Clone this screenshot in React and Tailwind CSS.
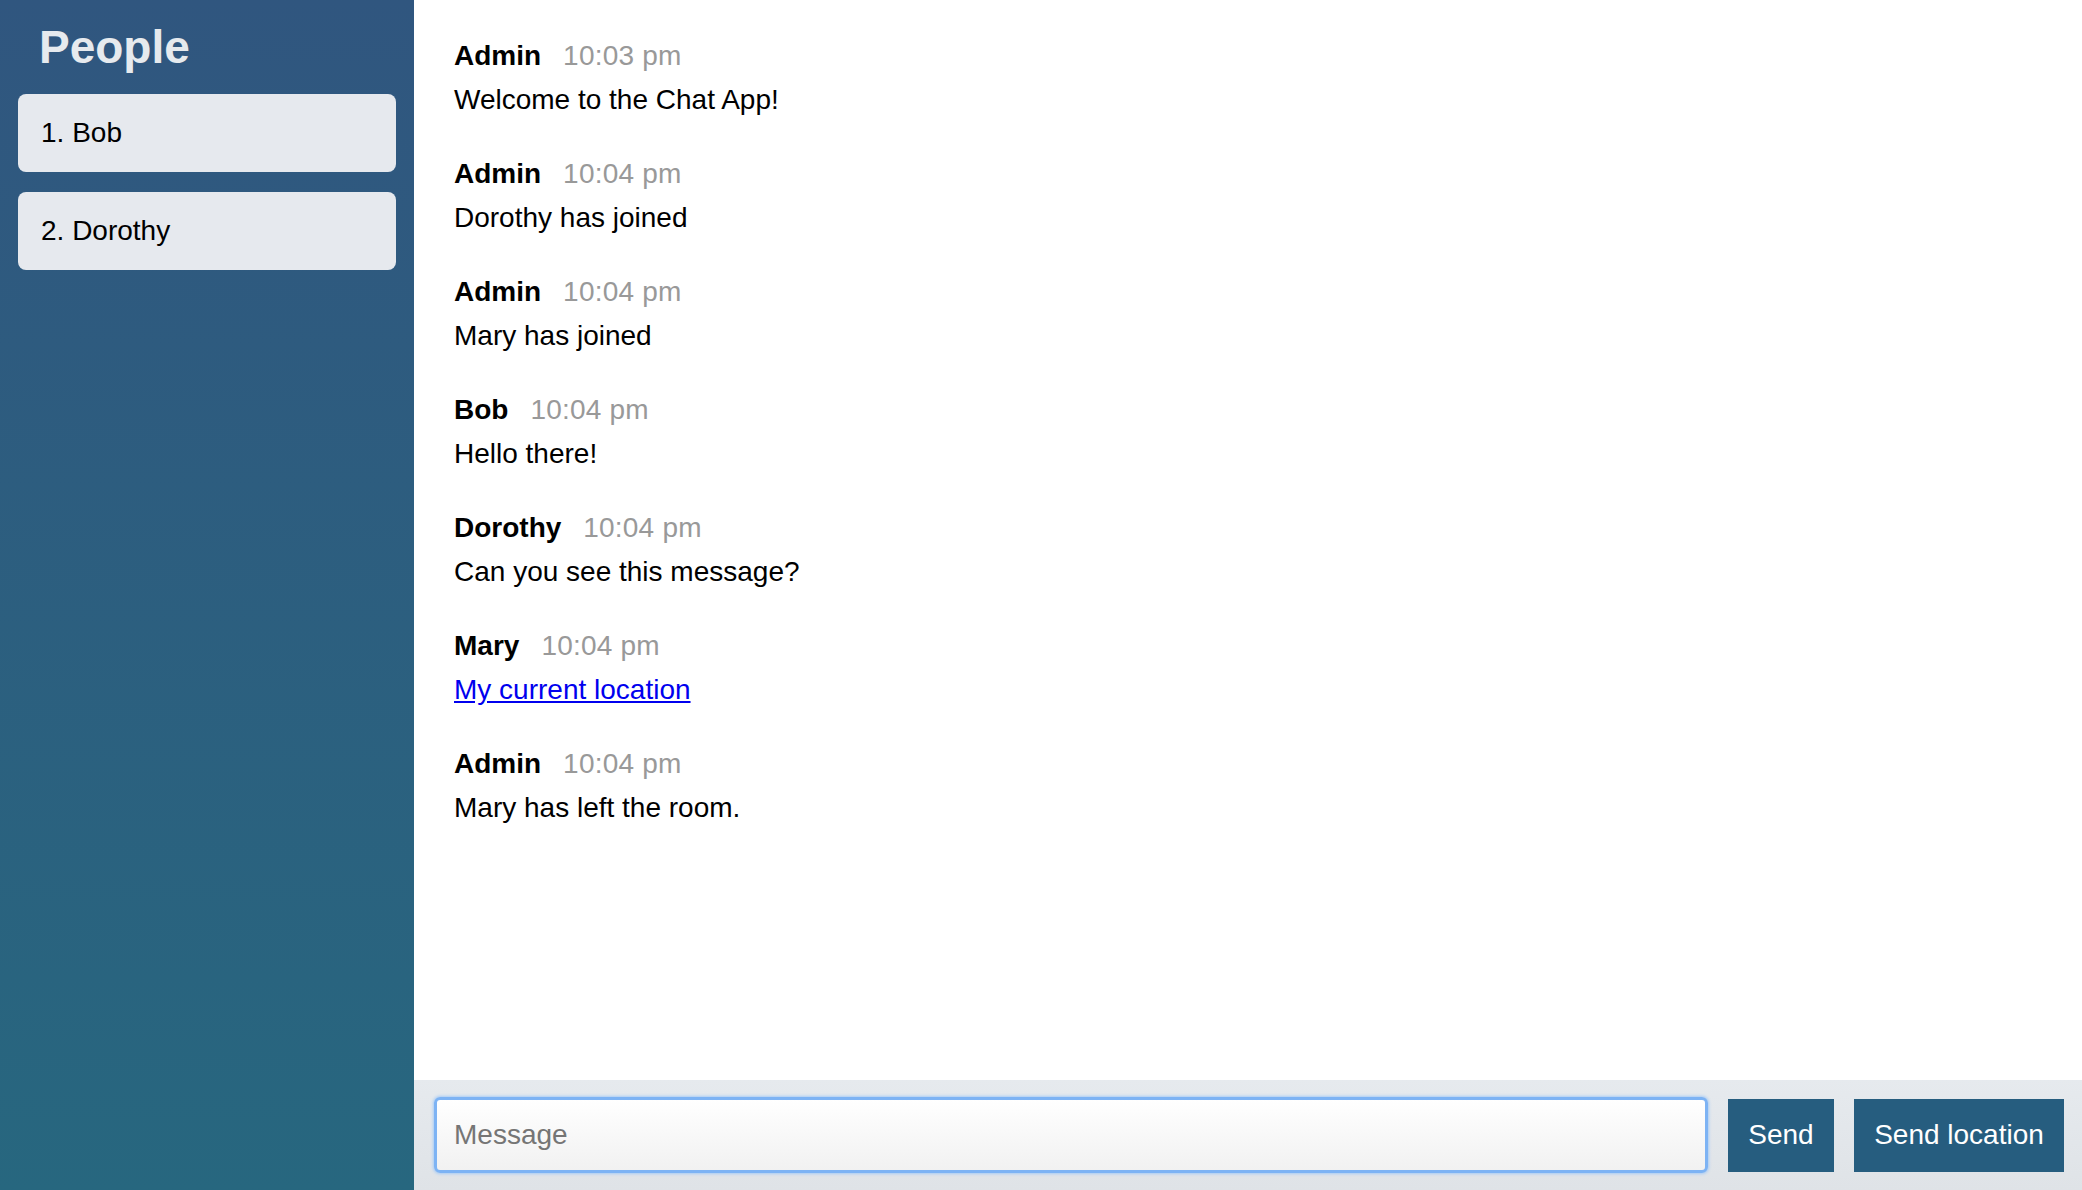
import React from "react";

const messages = [
  { from: "Admin", time: "10:03 pm", text: "Welcome to the Chat App!" },
  { from: "Admin", time: "10:04 pm", text: "Dorothy has joined" },
  { from: "Admin", time: "10:04 pm", text: "Mary has joined" },
  { from: "Bob", time: "10:04 pm", text: "Hello there!" },
  { from: "Dorothy", time: "10:04 pm", text: "Can you see this message?" },
  { from: "Mary", time: "10:04 pm", link: "My current location" },
  { from: "Admin", time: "10:04 pm", text: "Mary has left the room." },
];

export default function App() {
  return (
    <div
      className="flex w-[2082px] h-[1190px] overflow-hidden bg-white text-black"
      style={{ fontFamily: '"Liberation Sans", Arial, sans-serif' }}
    >
      <aside className="w-[414px] shrink-0 h-full bg-linear-to-b from-[#30567f] to-[#27677f] px-[18px] pt-[24px]">
        <h3 className="pl-[21px] text-[46px] leading-[46px] font-bold text-[#e6eaee] mb-[24px]">
          People
        </h3>
        <ol className="flex flex-col gap-[20px]">
          {["Bob", "Dorothy"].map((n, i) => (
            <li
              key={n}
              className="h-[78px] rounded-[8px] bg-[#e6e9ee] pl-[23px] text-[28px] leading-[78px]"
            >
              {i + 1}. {n}
            </li>
          ))}
        </ol>
      </aside>
      <main className="flex-1 flex flex-col h-full">
        <ol className="flex-1 pl-[40px] pt-[38px]">
          {messages.map((m, i) => (
            <li key={i} className="mb-[38px]">
              <div className="flex items-baseline h-[36px] leading-[36px]">
                <span className="text-[28px] font-bold mr-[22px]">{m.from}</span>
                <span className="text-[28px] text-[#999999] tracking-[0.2px]">{m.time}</span>
              </div>
              <div className="mt-[8px] h-[36px] leading-[36px] text-[28px]">
                {m.link ? (
                  <a href="#" className="text-[#0000ee] underline">
                    {m.link}
                  </a>
                ) : (
                  m.text
                )}
              </div>
            </li>
          ))}
        </ol>
        <footer className="h-[110px] shrink-0 flex items-center pl-[20px] pr-[18px] bg-linear-to-b from-[#e6eaee] to-[#dfe3e7]">
          <div className="flex-1 h-[76px] mr-[20px] rounded-[6px] border-[3px] border-[#7db3f4] shadow-[0_0_3px_1px_#a6cbf6] bg-linear-to-b from-white to-[#f1f1f1] flex items-center pl-[17px]">
            <span className="text-[28px] text-[#757575]">Message</span>
          </div>
          <button className="w-[106px] h-[73px] bg-[#265d7f] text-white text-[28px]">
            Send
          </button>
          <button className="w-[210px] h-[73px] ml-[20px] bg-[#265d7f] text-white text-[28px]">
            Send location
          </button>
        </footer>
      </main>
    </div>
  );
}
